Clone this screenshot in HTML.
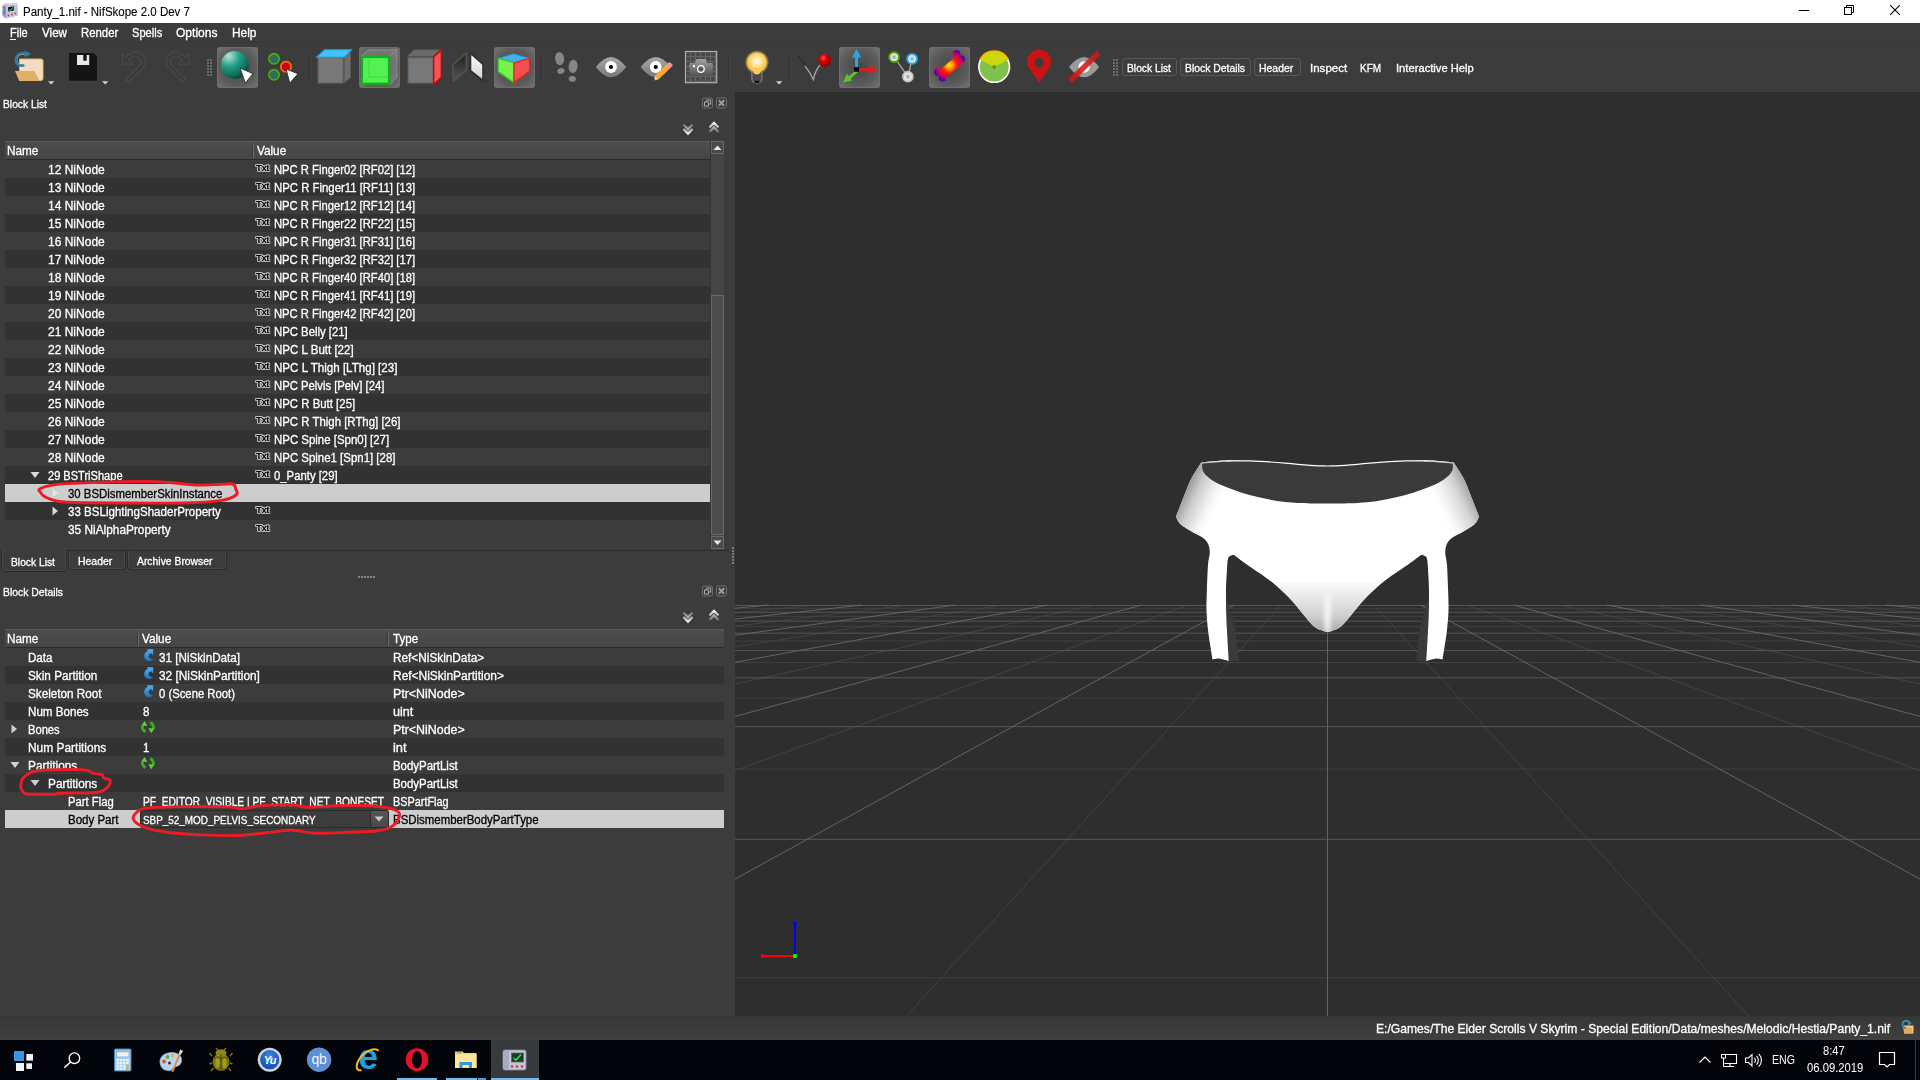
<!DOCTYPE html>
<html><head><meta charset="utf-8"><title>Panty_1.nif - NifSkope 2.0 Dev 7</title>
<style>
*{box-sizing:border-box;margin:0;padding:0}
html,body{width:1920px;height:1080px;overflow:hidden;background:#3c3c3c;font-family:"Liberation Sans",sans-serif;font-size:12px;color:#fff}
div,span,svg{position:absolute}
.t{white-space:nowrap;transform-origin:0 50%;-webkit-text-stroke:0.3px currentColor}
#titlebar{left:0;top:0;width:1920px;height:23px;background:#fff;color:#000}
#menubar{left:0;top:23px;width:1920px;height:20px;background:#3c3c3c}
#toolbar{left:0;top:43px;width:1920px;height:49px;background:#3c3c3c}
#viewport{left:735px;top:92px;width:1185px;height:924px;background:#2e2e2e;overflow:hidden}
#statusbar{left:0;top:1016px;width:1920px;height:24px;background:linear-gradient(#373737,#404040);border-top:1px solid #343434}
#taskbar{left:0;top:1040px;width:1920px;height:40px;background:#03050a}
.hdr{background:linear-gradient(#4d4d4d,#454545);border-top:1px solid #5a5a5a;border-bottom:1px solid #2b2b2b}
.rowd{background:#323232}
.rowl{background:#3c3c3c}
.sel{background:#cdcdcd}
.txt{font-size:9.5px;font-weight:bold;letter-spacing:-0.4px;transform:scaleX(1.001);transform-origin:0 0;color:#000;line-height:10px;text-shadow:-1px 0 #bdbdbd,1px 0 #bdbdbd,0 -1px #bdbdbd,0 1px #bdbdbd,1px 1px #a8a8a8,-1px -1px #a8a8a8,1px -1px #a8a8a8,-1px 1px #a8a8a8;white-space:nowrap}

</style></head>
<body>
<!-- titlebar -->
<div id="titlebar"><span class="t" style="left:23px;top:4px;font-size:12px;line-height:16px;transform:scaleX(0.9591);color:#000;-webkit-text-stroke:0.12px #000;">Panty_1.nif - NifSkope 2.0 Dev 7</span><svg style="left:0;top:0" width="24" height="23" viewBox="0 0 24 23">
<path d="M2.500 5.500 L5 3.500 H17 L17.600 5.500 V15.500 L6 18.600 L2.500 15.500 Z" fill="#b4b4d8"/>
<path d="M2.500 5.500 L5 3.500 H17 L16 5.200 Z" fill="#cfcfea"/>
<path d="M2.500 5.500 L6 6.200 V18.600 L2.500 15.500 Z" fill="#9696be"/>
<path d="M6 6.200 L17.600 5.500 V15.500 L6 18.600 Z" fill="#c2c2e2"/>
<path d="M8.200 7.200 L13.800 6.300 V10.600 L8.200 11.600 Z" fill="#0c140c"/>
<path d="M9 9.800 L10.500 10.300 L13 7.300" stroke="#38c038" stroke-width="1.100" fill="none"/>
<circle cx="8.400" cy="15.400" r="0.900" fill="#d83838"/><circle cx="11.900" cy="14.400" r="0.900" fill="#d83838"/><circle cx="15.400" cy="13.500" r="0.900" fill="#d83838"/>
<path d="M3.200 7.500 L5.300 8.300 M3.200 10 L5.300 10.800 M3.200 12.500 L5.300 13.300" stroke="#5a5a80" stroke-width="0.800"/>
</svg><svg style="left:1780px;top:0" width="140" height="23" viewBox="1780 0 140 23">
<path d="M1799 10.500 H1809" stroke="#000" stroke-width="1"/>
<path d="M1846.500 7 V5.500 H1853.500 V12.500 H1852" fill="none" stroke="#000" stroke-width="1"/><rect x="1844.500" y="7.500" width="7" height="7" fill="none" stroke="#000" stroke-width="1"/>
<path d="M1890.200 5.200 L1899.800 14.800 M1899.800 5.200 L1890.200 14.800" stroke="#000" stroke-width="1.050"/>
</svg></div>
<!-- menubar -->
<div id="menubar"></div><span class="t" style="left:10px;top:25px;font-size:12px;line-height:16px;transform:scaleX(0.9168);">File</span><span class="t" style="left:42px;top:25px;font-size:12px;line-height:16px;transform:scaleX(0.9696);">View</span><span class="t" style="left:81px;top:25px;font-size:12px;line-height:16px;transform:scaleX(0.9476);">Render</span><span class="t" style="left:132px;top:25px;font-size:12px;line-height:16px;transform:scaleX(0.9251);">Spells</span><span class="t" style="left:176px;top:25px;font-size:12px;line-height:16px;transform:scaleX(1.0028);">Options</span><span class="t" style="left:232px;top:25px;font-size:12px;line-height:16px;transform:scaleX(0.9911);">Help</span><div style="left:10px;top:39px;width:6px;height:1px;background:#fff"></div>
<!-- toolbar -->
<div id="toolbar"></div><div style="left:0;top:42px;width:1920px;height:1px;background:#383838"></div><svg style="left:0;top:43px" width="1920" height="49" viewBox="0 43 1920 49"><defs>
<radialGradient id="chk" cx="0.5" cy="0.5" r="0.75"><stop offset="0" stop-color="#454545"/><stop offset="0.6" stop-color="#5c5c5c"/><stop offset="1" stop-color="#787878"/></radialGradient>
<radialGradient id="sph" cx="0.28" cy="0.18" r="0.95"><stop offset="0" stop-color="#b8e6da"/><stop offset="0.4" stop-color="#22a086"/><stop offset="0.75" stop-color="#0d6c5a"/><stop offset="1" stop-color="#052e27"/></radialGradient>
<linearGradient id="cur" x1="0" y1="0" x2="1" y2="1"><stop offset="0" stop-color="#fff"/><stop offset="0.6" stop-color="#fff"/><stop offset="1" stop-color="#bbb"/></linearGradient>
<linearGradient id="eyeg" x1="0" y1="0" x2="0" y2="1"><stop offset="0" stop-color="#a8a8a8"/><stop offset="1" stop-color="#787878"/></linearGradient>
<linearGradient id="camg" x1="0" y1="0" x2="0" y2="1"><stop offset="0" stop-color="#a0a0a0"/><stop offset="1" stop-color="#505050"/></linearGradient>
<linearGradient id="fl1" x1="0" y1="0" x2="0" y2="1"><stop offset="0" stop-color="#1c1c1c"/><stop offset="1" stop-color="#585858"/></linearGradient>
<linearGradient id="fl2" x1="0" y1="0" x2="0" y2="1"><stop offset="0" stop-color="#fff"/><stop offset="1" stop-color="#d0d0d0"/></linearGradient>
<radialGradient id="bulb" cx="0.5" cy="0.45" r="0.55"><stop offset="0" stop-color="#fffdf0"/><stop offset="0.35" stop-color="#ffe9a8"/><stop offset="0.8" stop-color="#ffc552"/><stop offset="1" stop-color="#f7b63c"/></radialGradient>
<radialGradient id="glow" cx="0.5" cy="0.5" r="0.5"><stop offset="0.7" stop-color="#f4e060" stop-opacity="0.9"/><stop offset="1" stop-color="#e8e040" stop-opacity="0"/></radialGradient>
<radialGradient id="redb" cx="0.4" cy="0.3" r="0.7"><stop offset="0" stop-color="#ff5a4a"/><stop offset="0.4" stop-color="#d80000"/><stop offset="1" stop-color="#8a0000"/></radialGradient>
<radialGradient id="bone" gradientUnits="userSpaceOnUse" cx="949.3" cy="65.3" r="16.5"><stop offset="0" stop-color="#fff000"/><stop offset="0.22" stop-color="#ff9800"/><stop offset="0.45" stop-color="#ff1c10"/><stop offset="0.7" stop-color="#e00830"/><stop offset="0.88" stop-color="#8800a0"/><stop offset="1" stop-color="#5000a8"/></radialGradient>
<radialGradient id="nd" cx="0.5" cy="0.5" r="0.5"><stop offset="0" stop-color="#9a9a9a"/><stop offset="0.55" stop-color="#e0e0e0"/><stop offset="1" stop-color="#fff"/></radialGradient>
</defs><path d="M19.500 59 H41 Q43 59 43 61 V78.500 Q43 80.500 41 80.500 H19.500 Z" fill="#f3dcc0" stroke="#e0b46c" stroke-width="1"/><path d="M15 71 H34.500 L39.200 80.500 H19 Z" fill="#ddb06c"/><path d="M24.300 64.600 H19.800 A6.200 6.200 0 1 1 25 54" fill="none" stroke="#c9ced2" stroke-width="2.200" transform="translate(1.600,1.400)"/><path d="M24.300 65.600 H19.300 A6.400 6.400 0 1 1 25.500 53.900" fill="none" stroke="#2c7e9a" stroke-width="2.500"/><path d="M24.800 50.800 L31.300 54 L24.800 57.500 Z" fill="#2c7e9a"/><path d="M48 81.2 H54.4 L51.2 84.4 Z" fill="#cfcfcf"/><path d="M69 53 H93.500 L97 56.500 V80.700 H69 Z" fill="#141414"/><rect x="77" y="55" width="12.200" height="10" fill="#e8e8e8"/><rect x="83.300" y="55" width="3.400" height="5.700" fill="#141414"/><path d="M102 81.2 H108.4 L105.2 84.4 Z" fill="#cfcfcf"/><path d="M128.800 79.300 L141.200 66.700 A7.600 7.600 0 0 0 130 56.300 L128.600 57.600" fill="none" stroke="#4f4f4f" stroke-width="5.400" stroke-linecap="round"/><path d="M122.600 53.500 V64.200 H133.300 Z" fill="#3c3c3c" stroke="#4f4f4f" stroke-width="0.900"/><path d="M128.800 79.300 L141.200 66.700 A7.600 7.600 0 0 0 130 56.300 L128.600 57.600" fill="none" stroke="#3c3c3c" stroke-width="3.600" stroke-linecap="round"/><g transform="translate(311.500 0) scale(-1 1)"><path d="M128.800 79.300 L141.200 66.700 A7.600 7.600 0 0 0 130 56.300 L128.600 57.600" fill="none" stroke="#4f4f4f" stroke-width="5.400" stroke-linecap="round"/><path d="M122.600 53.500 V64.200 H133.300 Z" fill="#3c3c3c" stroke="#4f4f4f" stroke-width="0.900"/><path d="M128.800 79.300 L141.200 66.700 A7.600 7.600 0 0 0 130 56.300 L128.600 57.600" fill="none" stroke="#3c3c3c" stroke-width="3.600" stroke-linecap="round"/></g><rect x="207" y="59" width="2" height="2" fill="#6c6c6c"/><rect x="210" y="59" width="2" height="2" fill="#6c6c6c"/><rect x="207" y="62" width="2" height="2" fill="#6c6c6c"/><rect x="210" y="62" width="2" height="2" fill="#6c6c6c"/><rect x="207" y="65" width="2" height="2" fill="#6c6c6c"/><rect x="210" y="65" width="2" height="2" fill="#6c6c6c"/><rect x="207" y="68" width="2" height="2" fill="#6c6c6c"/><rect x="210" y="68" width="2" height="2" fill="#6c6c6c"/><rect x="207" y="71" width="2" height="2" fill="#6c6c6c"/><rect x="210" y="71" width="2" height="2" fill="#6c6c6c"/><rect x="207" y="74" width="2" height="2" fill="#6c6c6c"/><rect x="210" y="74" width="2" height="2" fill="#6c6c6c"/><rect x="217.5" y="47.5" width="40" height="40" rx="2" fill="url(#chk)" stroke="#6e6e6e" stroke-width="1"/><circle cx="234.900" cy="64.900" r="14" fill="url(#sph)"/><path d="M240.100 68 L253.100 73.700 L245.300 83.100 Z" fill="url(#cur)" stroke="#2a2a2a" stroke-width="0.900" stroke-linejoin="round"/><circle cx="274" cy="58.800" r="5.200" fill="#2c6e64" stroke="#4cae04" stroke-width="1.700"/><circle cx="274" cy="74.800" r="5.200" fill="#2c6e64" stroke="#4cae04" stroke-width="1.700"/><circle cx="286" cy="66.800" r="5.200" fill="#d40000" stroke="#f47404" stroke-width="1.700"/><path d="M286 69 L298 73.700 L289.800 83.100 Z" fill="url(#cur)" stroke="#2a2a2a" stroke-width="0.900" stroke-linejoin="round"/><rect x="309" y="52" width="1" height="31" fill="#343434"/><rect x="310" y="52" width="1" height="31" fill="#424242"/><rect x="318" y="57.600" width="25.300" height="25.500" fill="#787878" stroke="#5c5c5c" stroke-width="1"/><path d="M344.300 57.600 L350.500 51.300 V77.400 L344.300 83.100 Z" fill="#6e6e6e" stroke="#5a5a5a" stroke-width="0.800"/><path d="M316.300 57.400 L324.500 49.700 H351.900 L344.300 57.400 Z" fill="#40c4fc" stroke="#1c94d4" stroke-width="1.200" stroke-linejoin="round"/><rect x="359.5" y="47.5" width="40" height="40" rx="2" fill="url(#chk)" stroke="#6e6e6e" stroke-width="1"/><path d="M361 56 L368.800 49.800 H396.900 V77.400 L390 84.700" fill="#8a8a8a" fill-opacity="0.55" stroke="#8e8e8e" stroke-width="1"/><path d="M390 56 L396.900 49.800" stroke="#8e8e8e" stroke-width="1"/><rect x="362" y="57" width="27" height="26.700" fill="#54f054" stroke="#10b414" stroke-width="2.200"/><path d="M369 58 V77 H388 M369 77 L363 83" stroke="#3ee03e" stroke-width="1" fill="none"/><rect x="408" y="57.600" width="25.300" height="25.500" fill="#787878" stroke="#5c5c5c" stroke-width="1"/><path d="M407.300 56.300 L414 49.800 H440 L433.200 56.300 Z" fill="#6a6a6a" stroke="#5a5a5a" stroke-width="0.800"/><path d="M433.600 57.100 L441.400 49.600 V77.300 L433.600 84.400 Z" fill="#f05454" stroke="#cc0404" stroke-width="1.500" stroke-linejoin="round"/><path d="M452.700 64.900 L466.400 52.800 V70.100 L453.500 81.300 Z" fill="url(#fl1)" stroke="#505050" stroke-width="1.800" stroke-linejoin="round"/><path d="M470.400 53.100 L483.100 64.400 V80.800 L470.400 70.600 Z" fill="url(#fl2)" stroke="#303030" stroke-width="1.800" stroke-linejoin="round"/><rect x="494.5" y="47.5" width="40" height="40" rx="2" fill="url(#chk)" stroke="#6e6e6e" stroke-width="1"/><path d="M498.300 58.400 L513.400 53.900 L529.600 58.400 L514 62.800 Z" fill="#3cb4ec" stroke="#2a9ad4" stroke-width="0.800"/><path d="M498.300 58.400 L514 62.800 V82.600 L498.300 71.600 Z" fill="#7cf04c" stroke="#30d020" stroke-width="1.400" stroke-linejoin="round"/><path d="M514 62.800 L529.600 58.400 V71.100 L514 82.600 Z" fill="#f45050" stroke="#e42424" stroke-width="1.400" stroke-linejoin="round"/><rect x="541" y="52" width="1" height="31" fill="#343434"/><rect x="542" y="52" width="1" height="31" fill="#424242"/><g fill="#868686"><ellipse cx="559.600" cy="58.600" rx="4.500" ry="6.700" transform="rotate(-6 559.600 58.600)"/><ellipse cx="560.900" cy="71" rx="3.600" ry="2.900" transform="rotate(-10 560.900 71)"/><ellipse cx="573.100" cy="66.400" rx="4.500" ry="6.700" transform="rotate(6 573.100 66.400)"/><ellipse cx="572.300" cy="78.900" rx="3.600" ry="2.900" transform="rotate(10 572.300 78.900)"/></g><path d="M595.8 67 Q604 57 611 57 Q618 57 626.2 67 Q618 77.3 611 77.3 Q604 77.3 595.8 67 Z" fill="url(#eyeg)"/><circle cx="611" cy="67" r="5.900" fill="#fff"/><circle cx="611" cy="67" r="2.100" fill="#000"/><path d="M640.5999999999999 67 Q648.8 57 655.8 57 Q662.8 57 671.0 67 Q662.8 77.3 655.8 77.3 Q648.8 77.3 640.5999999999999 67 Z" fill="url(#eyeg)"/><circle cx="655.8" cy="67" r="5.900" fill="#fff"/><circle cx="655.8" cy="67" r="2.100" fill="#000"/><path d="M658.700 79.200 L655 75.700 L666.500 64.500 L670.200 68.100 Z" fill="#fcaa34"/><path d="M666.500 64.500 L668.600 62.500 Q669.600 61.700 670.600 62.700 L672.300 64.400 Q673.200 65.400 672.300 66.300 L670.200 68.100 Z" fill="#f890a8"/><path d="M655 75.700 L653.800 80.400 L658.700 79.200 Z" fill="#f4d8a8"/><path d="M653.800 80.400 L654.200 78.800 L655.400 80 Z" fill="#444"/><rect x="685.500" y="51.500" width="31.200" height="31.200" fill="#4a4a4a" stroke="#b0b0b0" stroke-width="1.200"/><path d="M690.5 52 V82 M686 56.5 H716 M695.5 52 V82 M686 61.5 H716 M700.5 52 V82 M686 66.5 H716 M705.5 52 V82 M686 71.5 H716 M710.5 52 V82 M686 76.5 H716 M715.5 52 V82 M686 81.5 H716 " stroke="#666" stroke-width="1" fill="none"/><path d="M689.300 64 Q689.300 63 690.300 63 H695 L696 60 Q696.300 59.100 697.300 59.100 H705 Q706 59.100 706.300 60 L707.300 63 H711.900 Q712.900 63 712.900 64 V76.300 H689.300 Z" fill="url(#camg)"/><circle cx="700.900" cy="69" r="3.300" fill="#666" stroke="#fff" stroke-width="1.300"/><rect x="699.600" y="67.700" width="2.600" height="2.600" fill="#555"/><rect x="693" y="65.200" width="2" height="2" fill="#fff"/><rect x="728" y="52" width="1" height="31" fill="#343434"/><rect x="729" y="52" width="1" height="31" fill="#424242"/><circle cx="756.900" cy="62.300" r="12.300" fill="url(#glow)"/><path d="M751.900 68 V79 Q751.900 83 756.900 83 Q761.900 83 761.900 79 V68" fill="#4a4a4a" stroke="#9a9a9a" stroke-width="0.900"/><rect x="754.600" y="80.800" width="4.600" height="2.200" fill="#0a0a0a"/><circle cx="756.900" cy="62.300" r="9.900" fill="url(#bulb)"/><path d="M752 68 Q752.500 74.500 756.900 74.500 Q761.300 74.500 761.800 68 Z" fill="#ffc95a"/><path d="M776 81.2 H782.4 L779.2 84.4 Z" fill="#cfcfcf"/><rect x="789" y="52" width="1" height="31" fill="#343434"/><rect x="790" y="52" width="1" height="31" fill="#424242"/><path d="M797.700 55.500 Q808 66 813.300 79.500" fill="none" stroke="#2c2c2c" stroke-width="1.200"/><path d="M805 66 Q810 72 813.300 79.500 Q815.500 70 820.500 64.500" fill="none" stroke="#b8b8b8" stroke-width="1.300" stroke-opacity="0.850"/><circle cx="824.600" cy="60.500" r="6.400" fill="url(#redb)"/><rect x="839.5" y="47.5" width="40" height="40" rx="2" fill="url(#chk)" stroke="#6e6e6e" stroke-width="1"/><path d="M855.100 69 V57.600 H851.900 L856.600 49 L861.300 57.600 H858.100 V69 Z" fill="#28a8e4"/><path d="M858 68.300 H869.600 V65.300 L877.400 69.800 L869.600 74.300 V71.300 H858 Z" fill="#e01c1c"/><path d="M856.400 70 L848.900 76.200 L846.800 73.800 L843 82.600 L852.500 80.600 L850.700 78.400 L858.200 72 Z" fill="#60c424"/><rect x="854.200" y="67.100" width="4.700" height="4.700" fill="#0a0a0a"/><path d="M894.100 57.100 L907.900 76.600 L912.100 58.800" fill="none" stroke="#a0a0a0" stroke-width="1.400"/><circle cx="894.1" cy="57.1" r="4.900" fill="url(#nd)" stroke="#44aa04" stroke-width="2"/><circle cx="912.1" cy="58.8" r="4.900" fill="url(#nd)" stroke="#14b0f0" stroke-width="2"/><circle cx="907.9" cy="76.6" r="4.900" fill="url(#nd)" stroke="#c4c4c4" stroke-width="2"/><rect x="929.5" y="47.5" width="40" height="40" rx="2" fill="url(#chk)" stroke="#6e6e6e" stroke-width="1"/><g fill="url(#bone)"><path d="M939.500 70 L955.500 56.500 L962 64 L946 77.500 Z"/><circle cx="938" cy="72" r="3.900"/><circle cx="942.500" cy="77.500" r="3.900"/><circle cx="956.500" cy="53.800" r="3.900"/><circle cx="961" cy="59.200" r="3.900"/></g><circle cx="994.200" cy="67" r="15.300" fill="#80c04c" stroke="#fff" stroke-width="1.600"/><path d="M994.200 67 L980.500 59.700 A15.500 15.500 0 0 1 1007.900 59.700 Z" fill="#ccd80c"/><path d="M980 59.800 A16 16 0 0 1 1008.400 59.800" fill="none" stroke="#fcb404" stroke-width="1.800"/><circle cx="994.200" cy="67" r="1.900" fill="#6c8c2c"/><path d="M1039.100 83.100 Q1033 73 1029.300 68.500 A12 12 0 1 1 1048.900 68.500 Q1045.200 73 1039.100 83.100 Z M1039.100 58.100 A4.700 4.700 0 1 0 1039.100 67.500 A4.700 4.700 0 1 0 1039.100 58.100 Z" fill="#c81414" fill-rule="evenodd"/><path d="M1069 67 Q1077 57 1084.100 57 Q1091.200 57 1099.200 67 Q1091.200 77.300 1084.100 77.300 Q1077 77.300 1069 67 Z" fill="#9a9a9a"/><circle cx="1084.100" cy="67" r="5.700" fill="#fff"/><path d="M1070 81 L1098.300 52.900" stroke="#d41818" stroke-opacity="0.880" stroke-width="5.600"/><rect x="1113" y="59" width="2" height="2" fill="#6c6c6c"/><rect x="1116" y="59" width="2" height="2" fill="#6c6c6c"/><rect x="1113" y="62" width="2" height="2" fill="#6c6c6c"/><rect x="1116" y="62" width="2" height="2" fill="#6c6c6c"/><rect x="1113" y="65" width="2" height="2" fill="#6c6c6c"/><rect x="1116" y="65" width="2" height="2" fill="#6c6c6c"/><rect x="1113" y="68" width="2" height="2" fill="#6c6c6c"/><rect x="1116" y="68" width="2" height="2" fill="#6c6c6c"/><rect x="1113" y="71" width="2" height="2" fill="#6c6c6c"/><rect x="1116" y="71" width="2" height="2" fill="#6c6c6c"/><rect x="1113" y="74" width="2" height="2" fill="#6c6c6c"/><rect x="1116" y="74" width="2" height="2" fill="#6c6c6c"/><rect x="1122.5" y="58.500" width="54" height="17" rx="2.500" fill="#3e3e3e" stroke="#585858" stroke-width="1"/><rect x="1180.5" y="58.500" width="70" height="17" rx="2.500" fill="#3e3e3e" stroke="#585858" stroke-width="1"/><rect x="1254.5" y="58.500" width="46" height="17" rx="2.500" fill="#3e3e3e" stroke="#585858" stroke-width="1"/></svg><span class="t" style="left:1127px;top:60px;font-size:11px;line-height:16px;transform:scaleX(0.9334);">Block List</span><span class="t" style="left:1185px;top:60px;font-size:11px;line-height:16px;transform:scaleX(0.9443);">Block Details</span><span class="t" style="left:1259px;top:60px;font-size:11px;line-height:16px;transform:scaleX(0.9486);">Header</span><span class="t" style="left:1310px;top:60px;font-size:11px;line-height:16px;transform:scaleX(1.0490);">Inspect</span><span class="t" style="left:1360px;top:60px;font-size:11px;line-height:16px;transform:scaleX(0.9052);">KFM</span><span class="t" style="left:1396px;top:60px;font-size:11px;line-height:16px;transform:scaleX(1.0180);">Interactive Help</span>
<!-- blocklist -->
<span class="t" style="left:3px;top:96px;font-size:11px;line-height:16px;transform:scaleX(0.9334);">Block List</span><div style="left:5px;top:141px;width:705px;height:409px;background:#3c3c3c;overflow:hidden"><div class="rowl" style="left:0;top:19px;width:705px;height:18px"></div><span class="t" style="left:43px;top:21px;font-size:12px;line-height:16px;transform:scaleX(1.0010);">12 NiNode</span><span class="txt" style="left:250.5px;top:22px">Txt</span><span class="t" style="left:269px;top:21px;font-size:12px;line-height:16px;transform:scaleX(0.9362);">NPC R Finger02 [RF02] [12]</span><div class="rowd" style="left:0;top:37px;width:705px;height:18px"></div><span class="t" style="left:43px;top:39px;font-size:12px;line-height:16px;transform:scaleX(1.0010);">13 NiNode</span><span class="txt" style="left:250.5px;top:40px">Txt</span><span class="t" style="left:269px;top:39px;font-size:12px;line-height:16px;transform:scaleX(0.9474);">NPC R Finger11 [RF11] [13]</span><div class="rowl" style="left:0;top:55px;width:705px;height:18px"></div><span class="t" style="left:43px;top:57px;font-size:12px;line-height:16px;transform:scaleX(1.0010);">14 NiNode</span><span class="txt" style="left:250.5px;top:58px">Txt</span><span class="t" style="left:269px;top:57px;font-size:12px;line-height:16px;transform:scaleX(0.9362);">NPC R Finger12 [RF12] [14]</span><div class="rowd" style="left:0;top:73px;width:705px;height:18px"></div><span class="t" style="left:43px;top:75px;font-size:12px;line-height:16px;transform:scaleX(1.0010);">15 NiNode</span><span class="txt" style="left:250.5px;top:76px">Txt</span><span class="t" style="left:269px;top:75px;font-size:12px;line-height:16px;transform:scaleX(0.9362);">NPC R Finger22 [RF22] [15]</span><div class="rowl" style="left:0;top:91px;width:705px;height:18px"></div><span class="t" style="left:43px;top:93px;font-size:12px;line-height:16px;transform:scaleX(1.0010);">16 NiNode</span><span class="txt" style="left:250.5px;top:94px">Txt</span><span class="t" style="left:269px;top:93px;font-size:12px;line-height:16px;transform:scaleX(0.9362);">NPC R Finger31 [RF31] [16]</span><div class="rowd" style="left:0;top:109px;width:705px;height:18px"></div><span class="t" style="left:43px;top:111px;font-size:12px;line-height:16px;transform:scaleX(1.0010);">17 NiNode</span><span class="txt" style="left:250.5px;top:112px">Txt</span><span class="t" style="left:269px;top:111px;font-size:12px;line-height:16px;transform:scaleX(0.9362);">NPC R Finger32 [RF32] [17]</span><div class="rowl" style="left:0;top:127px;width:705px;height:18px"></div><span class="t" style="left:43px;top:129px;font-size:12px;line-height:16px;transform:scaleX(1.0010);">18 NiNode</span><span class="txt" style="left:250.5px;top:130px">Txt</span><span class="t" style="left:269px;top:129px;font-size:12px;line-height:16px;transform:scaleX(0.9362);">NPC R Finger40 [RF40] [18]</span><div class="rowd" style="left:0;top:145px;width:705px;height:18px"></div><span class="t" style="left:43px;top:147px;font-size:12px;line-height:16px;transform:scaleX(1.0010);">19 NiNode</span><span class="txt" style="left:250.5px;top:148px">Txt</span><span class="t" style="left:269px;top:147px;font-size:12px;line-height:16px;transform:scaleX(0.9362);">NPC R Finger41 [RF41] [19]</span><div class="rowl" style="left:0;top:163px;width:705px;height:18px"></div><span class="t" style="left:43px;top:165px;font-size:12px;line-height:16px;transform:scaleX(1.0010);">20 NiNode</span><span class="txt" style="left:250.5px;top:166px">Txt</span><span class="t" style="left:269px;top:165px;font-size:12px;line-height:16px;transform:scaleX(0.9362);">NPC R Finger42 [RF42] [20]</span><div class="rowd" style="left:0;top:181px;width:705px;height:18px"></div><span class="t" style="left:43px;top:183px;font-size:12px;line-height:16px;transform:scaleX(1.0010);">21 NiNode</span><span class="txt" style="left:250.5px;top:184px">Txt</span><span class="t" style="left:269px;top:183px;font-size:12px;line-height:16px;transform:scaleX(0.9451);">NPC Belly [21]</span><div class="rowl" style="left:0;top:199px;width:705px;height:18px"></div><span class="t" style="left:43px;top:201px;font-size:12px;line-height:16px;transform:scaleX(1.0010);">22 NiNode</span><span class="txt" style="left:250.5px;top:202px">Txt</span><span class="t" style="left:269px;top:201px;font-size:12px;line-height:16px;transform:scaleX(0.9602);">NPC L Butt [22]</span><div class="rowd" style="left:0;top:217px;width:705px;height:18px"></div><span class="t" style="left:43px;top:219px;font-size:12px;line-height:16px;transform:scaleX(1.0010);">23 NiNode</span><span class="txt" style="left:250.5px;top:220px">Txt</span><span class="t" style="left:269px;top:219px;font-size:12px;line-height:16px;transform:scaleX(0.9652);">NPC L Thigh [LThg] [23]</span><div class="rowl" style="left:0;top:235px;width:705px;height:18px"></div><span class="t" style="left:43px;top:237px;font-size:12px;line-height:16px;transform:scaleX(1.0010);">24 NiNode</span><span class="txt" style="left:250.5px;top:238px">Txt</span><span class="t" style="left:269px;top:237px;font-size:12px;line-height:16px;transform:scaleX(0.9401);">NPC Pelvis [Pelv] [24]</span><div class="rowd" style="left:0;top:253px;width:705px;height:18px"></div><span class="t" style="left:43px;top:255px;font-size:12px;line-height:16px;transform:scaleX(1.0010);">25 NiNode</span><span class="txt" style="left:250.5px;top:256px">Txt</span><span class="t" style="left:269px;top:255px;font-size:12px;line-height:16px;transform:scaleX(0.9506);">NPC R Butt [25]</span><div class="rowl" style="left:0;top:271px;width:705px;height:18px"></div><span class="t" style="left:43px;top:273px;font-size:12px;line-height:16px;transform:scaleX(1.0010);">26 NiNode</span><span class="txt" style="left:250.5px;top:274px">Txt</span><span class="t" style="left:269px;top:273px;font-size:12px;line-height:16px;transform:scaleX(0.9510);">NPC R Thigh [RThg] [26]</span><div class="rowd" style="left:0;top:289px;width:705px;height:18px"></div><span class="t" style="left:43px;top:291px;font-size:12px;line-height:16px;transform:scaleX(1.0010);">27 NiNode</span><span class="txt" style="left:250.5px;top:292px">Txt</span><span class="t" style="left:269px;top:291px;font-size:12px;line-height:16px;transform:scaleX(0.9530);">NPC Spine [Spn0] [27]</span><div class="rowl" style="left:0;top:307px;width:705px;height:18px"></div><span class="t" style="left:43px;top:309px;font-size:12px;line-height:16px;transform:scaleX(1.0010);">28 NiNode</span><span class="txt" style="left:250.5px;top:310px">Txt</span><span class="t" style="left:269px;top:309px;font-size:12px;line-height:16px;transform:scaleX(0.9532);">NPC Spine1 [Spn1] [28]</span><div class="rowd" style="left:0;top:325px;width:705px;height:18px"></div><div style="left:0;top:325px;width:240px;height:15px;overflow:hidden"><span class="t" style="left:43px;top:2px;font-size:12px;line-height:16px;transform:scaleX(0.9209);">29 BSTriShape</span></div><span class="t" style="left:269px;top:327px;font-size:12px;line-height:16px;transform:scaleX(0.9441);">0_Panty [29]</span><span class="txt" style="left:250.5px;top:328px">Txt</span><div class="sel" style="left:0;top:343px;width:705px;height:18px"></div><span class="t" style="left:63px;top:345px;font-size:12px;line-height:16px;transform:scaleX(0.9481);color:#000;">30 BSDismemberSkinInstance</span><div class="rowd" style="left:0;top:361px;width:705px;height:18px"></div><span class="t" style="left:63px;top:363px;font-size:12px;line-height:16px;transform:scaleX(0.9630);">33 BSLightingShaderProperty</span><span class="txt" style="left:250.5px;top:364px">Txt</span><div class="rowl" style="left:0;top:379px;width:705px;height:18px"></div><span class="t" style="left:63px;top:381px;font-size:12px;line-height:16px;transform:scaleX(0.9876);">35 NiAlphaProperty</span><span class="txt" style="left:250.5px;top:382px">Txt</span><svg style="left:24px;top:329px" width="12" height="10"><path d="M1.5 2 L10.5 2 L6 8 Z" fill="#d8d8d8"/></svg><svg style="left:45px;top:346px" width="10" height="12"><path d="M2.5 1.5 L8 6 L2.5 10.5 Z" fill="#e4e4e4"/></svg><svg style="left:45px;top:364px" width="10" height="12"><path d="M2.5 1.5 L8 6 L2.5 10.5 Z" fill="#d8d8d8"/></svg><div class="hdr" style="left:0;top:0;width:705px;height:19px"></div><div style="left:248px;top:2px;width:1px;height:15px;background:#6a6a6a"></div><div style="left:247px;top:2px;width:1px;height:15px;background:#3a3a3a"></div><span class="t" style="left:2px;top:2px;font-size:12px;line-height:16px;transform:scaleX(0.9777);">Name</span><span class="t" style="left:252px;top:2px;font-size:12px;line-height:16px;transform:scaleX(0.9791);">Value</span></div><div style="left:710px;top:141px;width:1px;height:409px;background:#343434"></div><div style="left:711px;top:141px;width:13px;height:409px;background:#454545"></div><div style="left:711px;top:141px;width:13px;height:13px;background:#4a4a4a;border:1px solid #666"></div><svg style="left:711px;top:141px" width="13" height="13"><path d="M2.5 9 L6.5 4.5 L10.5 9 Z" fill="#e8e8e8"/></svg><div style="left:711px;top:536px;width:13px;height:13px;background:#4a4a4a;border:1px solid #666"></div><svg style="left:711px;top:536px" width="13" height="13"><path d="M2.5 4.5 L10.5 4.5 L6.5 9 Z" fill="#e8e8e8"/></svg><div style="left:711px;top:295px;width:13px;height:240px;background:#4d4d4d;border:1px solid #686868"></div><div style="left:0;top:550px;width:729px;height:1px;background:#2b2b2b"></div><div style="left:1px;top:550px;width:66px;height:22px;background:#3c3c3c;border:1px solid #2c2c2c;border-top:none;border-radius:0 0 4px 4px;box-shadow:inset 1px 0 0 #484848,inset -1px 0 0 #484848,inset 0 -1px 0 #484848"></div><div style="left:68px;top:551px;width:58px;height:19px;background:#3c3c3c;border:1px solid #2c2c2c;border-top:none;border-radius:0 0 4px 4px;box-shadow:inset 1px 0 0 #484848,inset -1px 0 0 #484848,inset 0 -1px 0 #484848"></div><div style="left:127px;top:551px;width:100px;height:19px;background:#3c3c3c;border:1px solid #2c2c2c;border-top:none;border-radius:0 0 4px 4px;box-shadow:inset 1px 0 0 #484848,inset -1px 0 0 #484848,inset 0 -1px 0 #484848"></div><span class="t" style="left:11px;top:554px;font-size:11px;line-height:16px;transform:scaleX(0.9334);">Block List</span><span class="t" style="left:78px;top:553px;font-size:11px;line-height:16px;transform:scaleX(0.9486);">Header</span><span class="t" style="left:137px;top:553px;font-size:11px;line-height:16px;transform:scaleX(0.9430);">Archive Browser</span>
<!-- blockdetails -->
<span class="t" style="left:3px;top:584px;font-size:11px;line-height:16px;transform:scaleX(0.9443);">Block Details</span><div style="left:5px;top:629px;width:719px;height:199px;background:#3c3c3c;overflow:hidden"><div class="rowl" style="left:0;top:19px;width:719px;height:18px"></div><span class="t" style="left:23px;top:21px;font-size:12px;line-height:16px;transform:scaleX(0.9627);">Data</span><svg style="left:131px;top:19px" width="20" height="18" viewBox="0 0 20 18"><defs><linearGradient id="rg19" x1="0" y1="0" x2="0" y2="1"><stop offset="0" stop-color="#52b0f2"/><stop offset="1" stop-color="#1a76c6"/></linearGradient></defs><path d="M17.1 11.2 Q15 13.3 12.6 12.9 Q8.2 12.1 8.2 7.9 Q8.3 4 12.1 2.7 L10.6 1.2 H17.2 V7.2 L15.2 5.3 Q12.3 6.3 12.5 8.4 Q12.9 10.6 17.1 11.2 Z" fill="url(#rg19)"/></svg><span class="t" style="left:154px;top:21px;font-size:12px;line-height:16px;transform:scaleX(0.9725);">31 [NiSkinData]</span><span class="t" style="left:388px;top:21px;font-size:12px;line-height:16px;transform:scaleX(0.9829);">Ref&lt;NiSkinData&gt;</span><div class="rowd" style="left:0;top:37px;width:719px;height:18px"></div><span class="t" style="left:23px;top:39px;font-size:12px;line-height:16px;transform:scaleX(0.9793);">Skin Partition</span><svg style="left:131px;top:37px" width="20" height="18" viewBox="0 0 20 18"><defs><linearGradient id="rg37" x1="0" y1="0" x2="0" y2="1"><stop offset="0" stop-color="#52b0f2"/><stop offset="1" stop-color="#1a76c6"/></linearGradient></defs><path d="M17.1 11.2 Q15 13.3 12.6 12.9 Q8.2 12.1 8.2 7.9 Q8.3 4 12.1 2.7 L10.6 1.2 H17.2 V7.2 L15.2 5.3 Q12.3 6.3 12.5 8.4 Q12.9 10.6 17.1 11.2 Z" fill="url(#rg37)"/></svg><span class="t" style="left:154px;top:39px;font-size:12px;line-height:16px;transform:scaleX(0.9888);">32 [NiSkinPartition]</span><span class="t" style="left:388px;top:39px;font-size:12px;line-height:16px;transform:scaleX(0.9961);">Ref&lt;NiSkinPartition&gt;</span><div class="rowl" style="left:0;top:55px;width:719px;height:18px"></div><span class="t" style="left:23px;top:57px;font-size:12px;line-height:16px;transform:scaleX(0.9735);">Skeleton Root</span><svg style="left:131px;top:55px" width="20" height="18" viewBox="0 0 20 18"><defs><linearGradient id="rg55" x1="0" y1="0" x2="0" y2="1"><stop offset="0" stop-color="#52b0f2"/><stop offset="1" stop-color="#1a76c6"/></linearGradient></defs><path d="M17.1 11.2 Q15 13.3 12.6 12.9 Q8.2 12.1 8.2 7.9 Q8.3 4 12.1 2.7 L10.6 1.2 H17.2 V7.2 L15.2 5.3 Q12.3 6.3 12.5 8.4 Q12.9 10.6 17.1 11.2 Z" fill="url(#rg55)"/></svg><span class="t" style="left:154px;top:57px;font-size:12px;line-height:16px;transform:scaleX(0.9408);">0 (Scene Root)</span><span class="t" style="left:388px;top:57px;font-size:12px;line-height:16px;transform:scaleX(1.0341);">Ptr&lt;NiNode&gt;</span><div class="rowd" style="left:0;top:73px;width:719px;height:18px"></div><span class="t" style="left:23px;top:75px;font-size:12px;line-height:16px;transform:scaleX(0.9678);">Num Bones</span><span class="t" style="left:138px;top:75px;font-size:12px;line-height:16px;transform:scaleX(0.9577);">8</span><span class="t" style="left:388px;top:75px;font-size:12px;line-height:16px;transform:scaleX(1.0485);">uint</span><div class="rowl" style="left:0;top:91px;width:719px;height:18px"></div><span class="t" style="left:23px;top:93px;font-size:12px;line-height:16px;transform:scaleX(0.9307);">Bones</span><svg style="left:131px;top:91px" width="20" height="18" viewBox="0 0 20 18"><path d="M9.6 11.6 Q5.6 10 6.6 5.2" fill="none" stroke="#3aac22" stroke-width="2.8"/><path d="M5.4 5.6 L8.6 0.9 L11.4 5.9 Z" fill="#62d23c"/><path d="M14.2 2.6 Q18.2 4.2 17.2 9" fill="none" stroke="#3aac22" stroke-width="2.8"/><path d="M18.4 8.6 L15.2 13.3 L12.4 8.3 Z" fill="#62d23c"/></svg><span class="t" style="left:388px;top:93px;font-size:12px;line-height:16px;transform:scaleX(1.0341);">Ptr&lt;NiNode&gt;</span><div class="rowd" style="left:0;top:109px;width:719px;height:18px"></div><span class="t" style="left:23px;top:111px;font-size:12px;line-height:16px;transform:scaleX(0.9945);">Num Partitions</span><span class="t" style="left:138px;top:111px;font-size:12px;line-height:16px;transform:scaleX(0.9577);">1</span><span class="t" style="left:388px;top:111px;font-size:12px;line-height:16px;transform:scaleX(1.0721);">int</span><div class="rowl" style="left:0;top:127px;width:719px;height:18px"></div><div style="left:0;top:127px;width:133px;height:14px;overflow:hidden"><span class="t" style="left:23px;top:2px;font-size:12px;line-height:16px;transform:scaleX(0.9846);">Partitions</span></div><svg style="left:131px;top:127px" width="20" height="18" viewBox="0 0 20 18"><path d="M9.6 11.6 Q5.6 10 6.6 5.2" fill="none" stroke="#3aac22" stroke-width="2.8"/><path d="M5.4 5.6 L8.6 0.9 L11.4 5.9 Z" fill="#62d23c"/><path d="M14.2 2.6 Q18.2 4.2 17.2 9" fill="none" stroke="#3aac22" stroke-width="2.8"/><path d="M18.4 8.6 L15.2 13.3 L12.4 8.3 Z" fill="#62d23c"/></svg><span class="t" style="left:388px;top:129px;font-size:12px;line-height:16px;transform:scaleX(0.9519);">BodyPartList</span><div class="rowd" style="left:0;top:145px;width:719px;height:18px"></div><span class="t" style="left:43px;top:147px;font-size:12px;line-height:16px;transform:scaleX(0.9846);">Partitions</span><span class="t" style="left:388px;top:147px;font-size:12px;line-height:16px;transform:scaleX(0.9519);">BodyPartList</span><div class="rowl" style="left:0;top:163px;width:719px;height:18px"></div><span class="t" style="left:63px;top:165px;font-size:12px;line-height:16px;transform:scaleX(0.9392);">Part Flag</span><span class="t" style="left:388px;top:165px;font-size:12px;line-height:16px;transform:scaleX(0.9057);">BSPartFlag</span><div style="left:133px;top:163px;width:250px;height:15px;overflow:hidden"><span class="t" style="left:5px;top:2px;font-size:12px;line-height:16px;transform:scaleX(0.8490);">PF_EDITOR_VISIBLE | PF_START_NET_BONESET</span></div><div class="sel" style="left:0;top:181px;width:719px;height:18px"></div><span class="t" style="left:63px;top:183px;font-size:12px;line-height:16px;transform:scaleX(0.9587);color:#000;">Body Part</span><span class="t" style="left:388px;top:183px;font-size:12px;line-height:16px;transform:scaleX(0.9533);color:#000;">BSDismemberBodyPartType</span><div style="left:135px;top:181px;width:249px;height:18px;background:#3c3c3c;border:1px solid #2a2a2a;border-radius:2px"></div><div style="left:365px;top:182px;width:18px;height:16px;background:linear-gradient(#555,#484848);border-left:1px solid #2e2e2e"></div><svg style="left:369px;top:186px" width="10" height="8"><path d="M0.5 1.5 L9.5 1.5 L5 6.5 Z" fill="#c8c8c8"/></svg><span class="t" style="left:138px;top:183px;font-size:11px;line-height:16px;transform:scaleX(0.9005);">SBP_52_MOD_PELVIS_SECONDARY</span><svg style="left:4px;top:94px" width="10" height="12"><path d="M2.5 1.5 L8 6 L2.5 10.5 Z" fill="#d0d0d0"/></svg><svg style="left:4px;top:131px" width="12" height="10"><path d="M1.5 2 L10.5 2 L6 8 Z" fill="#d0d0d0"/></svg><svg style="left:24px;top:149px" width="12" height="10"><path d="M1.5 2 L10.5 2 L6 8 Z" fill="#d0d0d0"/></svg><div class="hdr" style="left:0;top:0;width:719px;height:19px"></div><div style="left:133px;top:2px;width:1px;height:15px;background:#6a6a6a"></div><div style="left:132px;top:2px;width:1px;height:15px;background:#3a3a3a"></div><div style="left:383px;top:2px;width:1px;height:15px;background:#6a6a6a"></div><div style="left:382px;top:2px;width:1px;height:15px;background:#3a3a3a"></div><span class="t" style="left:2px;top:2px;font-size:12px;line-height:16px;transform:scaleX(0.9777);">Name</span><span class="t" style="left:137px;top:2px;font-size:12px;line-height:16px;transform:scaleX(0.9791);">Value</span><span class="t" style="left:388px;top:2px;font-size:12px;line-height:16px;transform:scaleX(0.9656);">Type</span></div>
<!-- viewport -->
<svg style="left:735px;top:92px" width="1185" height="924" viewBox="735 92 1185 924"><rect x="735" y="92" width="1185" height="924" fill="#2e2e2e"/><path d="M735.0 977.83H1920.0M735.0 769.09H1920.0M735.0 698.20H1920.0M735.0 662.50H1920.0M735.0 641.01H1920.0M735.0 626.64H1920.0M735.0 616.36H1920.0M735.0 608.64H1920.0" stroke="#404040" stroke-width="1" fill="none"/><path d="M629.3 605.06L-4989.2 1016M722.4 605.06L-4147.0 1016M815.5 605.06L-3304.7 1016M908.6 605.06L-2462.5 1016M1001.7 605.06L-1620.3 1016M1094.8 605.06L-778.1 1016M1187.9 605.06L64.2 1016M1281.0 605.06L906.4 1016M1374.0 605.06L1748.6 1016M1467.1 605.06L2590.8 1016M1560.2 605.06L3433.1 1016M1653.3 605.06L4275.3 1016M1746.4 605.06L5117.5 1016M1839.5 605.06L5959.7 1016M1932.6 605.06L6802.0 1016M2025.7 605.06L7644.2 1016" stroke="#484848" stroke-width="0.8" fill="none"/><path d="M735.0 839.32H1920.0M735.0 726.64H1920.0M735.0 677.82H1920.0M735.0 650.57H1920.0M735.0 633.17H1920.0M735.0 621.11H1920.0M735.0 612.25H1920.0M735.0 605.46H1920.0" stroke="#565656" stroke-width="1" fill="none"/><path d="M582.8 605.06L-5410.3 1016M675.9 605.06L-4568.1 1016M769.0 605.06L-3725.9 1016M862.1 605.06L-2883.6 1016M955.1 605.06L-2041.4 1016M1048.2 605.06L-1199.2 1016M1141.3 605.06L-357.0 1016M1234.4 605.06L485.3 1016M1327.5 605.06L1327.5 1016M1420.6 605.06L2169.7 1016M1513.7 605.06L3012.0 1016M1606.8 605.06L3854.2 1016M1699.9 605.06L4696.4 1016M1792.9 605.06L5538.6 1016M1886.0 605.06L6380.9 1016M1979.1 605.06L7223.1 1016M2072.2 605.06L8065.3 1016" stroke="#6a6a6a" stroke-width="0.9" fill="none"/><defs>
<linearGradient id="gl" gradientUnits="userSpaceOnUse" x1="1186" y1="488" x2="1222" y2="505"><stop offset="0" stop-color="#999"/><stop offset="0.3" stop-color="#cdcdcd"/><stop offset="0.65" stop-color="#f0f0f0"/><stop offset="1" stop-color="#fff" stop-opacity="0"/></linearGradient>
<linearGradient id="gr" gradientUnits="userSpaceOnUse" x1="1469" y1="488" x2="1433" y2="505"><stop offset="0" stop-color="#a4a4a4"/><stop offset="0.3" stop-color="#d4d4d4"/><stop offset="0.65" stop-color="#f2f2f2"/><stop offset="1" stop-color="#fff" stop-opacity="0"/></linearGradient>
<filter id="bl" x="-30%" y="-60%" width="160%" height="220%"><feGaussianBlur stdDeviation="3.5"/></filter><filter id="bl2" x="-30%" y="-60%" width="160%" height="220%"><feGaussianBlur stdDeviation="7"/></filter>
<linearGradient id="gv" gradientUnits="userSpaceOnUse" x1="0" y1="580" x2="0" y2="633"><stop offset="0" stop-color="#e0e0e0" stop-opacity="0"/><stop offset="0.35" stop-color="#e4e4e4" stop-opacity="0.9"/><stop offset="0.7" stop-color="#cccccc"/><stop offset="0.92" stop-color="#b0b0b0"/><stop offset="1" stop-color="#a0a0a0"/></linearGradient><filter id="bl3" x="-300%" y="-30%" width="700%" height="160%"><feGaussianBlur stdDeviation="2.6 4"/></filter>
<clipPath id="mc"><path d="M1327.50 465.40C1321.67 465.40 1317.08 465.23 1310.00 464.75C1302.92 464.27 1293.33 463.16 1285.00 462.50C1276.67 461.84 1267.50 461.17 1260.00 460.80C1252.50 460.43 1246.25 460.33 1240.00 460.30C1233.75 460.27 1228.96 460.23 1222.50 460.60C1216.04 460.97 1204.79 462.18 1201.25 462.50C1200.29 464.00 1197.38 468.38 1195.50 471.50C1193.62 474.62 1192.17 476.50 1190.00 481.25C1187.83 486.00 1184.83 494.12 1182.50 500.00C1180.17 505.88 1177.08 513.75 1176.00 516.50C1176.67 517.71 1177.46 521.29 1180.00 523.75C1182.54 526.21 1187.50 528.96 1191.25 531.25C1195.00 533.54 1199.71 535.42 1202.50 537.50C1205.29 539.58 1206.79 541.25 1208.00 543.75C1209.21 546.25 1209.75 548.96 1209.75 552.50C1209.75 556.04 1208.47 558.75 1208.00 565.00C1207.53 571.25 1207.15 582.50 1206.90 590.00C1206.65 597.50 1206.32 603.33 1206.50 610.00C1206.68 616.67 1207.32 623.75 1208.00 630.00C1208.68 636.25 1209.85 642.60 1210.60 647.50C1211.35 652.40 1212.18 657.42 1212.50 659.40C1213.54 659.25 1216.04 658.23 1218.75 658.50C1221.46 658.77 1227.08 660.58 1228.75 661.00C1228.54 657.50 1227.92 647.67 1227.50 640.00C1227.08 632.33 1226.50 623.33 1226.25 615.00C1226.00 606.67 1225.89 597.33 1226.00 590.00C1226.11 582.67 1226.57 576.21 1226.90 571.00C1227.23 565.79 1227.40 561.28 1228.00 558.75C1228.60 556.22 1229.54 556.47 1230.50 555.80C1231.46 555.13 1233.21 554.92 1233.75 554.75C1236.04 556.46 1241.04 560.38 1247.50 565.00C1253.96 569.62 1265.21 576.67 1272.50 582.50C1279.79 588.33 1286.04 594.58 1291.25 600.00C1296.46 605.42 1300.00 610.62 1303.75 615.00C1307.50 619.38 1310.62 623.62 1313.75 626.25C1316.88 628.88 1320.21 629.86 1322.50 630.80C1324.79 631.74 1325.83 631.90 1327.50 631.90C1329.17 631.90 1330.21 631.74 1332.50 630.80C1334.79 629.86 1338.12 628.88 1341.25 626.25C1344.38 623.62 1347.50 619.38 1351.25 615.00C1355.00 610.62 1358.54 605.42 1363.75 600.00C1368.96 594.58 1375.21 588.33 1382.50 582.50C1389.79 576.67 1401.04 569.62 1407.50 565.00C1413.96 560.38 1418.96 556.46 1421.25 554.75C1421.79 554.92 1423.54 555.13 1424.50 555.80C1425.46 556.47 1426.40 556.22 1427.00 558.75C1427.60 561.28 1427.77 565.79 1428.10 571.00C1428.43 576.21 1428.89 582.67 1429.00 590.00C1429.11 597.33 1429.00 606.67 1428.75 615.00C1428.50 623.33 1427.92 632.33 1427.50 640.00C1427.08 647.67 1426.46 657.50 1426.25 661.00C1427.92 660.58 1433.54 658.77 1436.25 658.50C1438.96 658.23 1441.46 659.25 1442.50 659.40C1442.82 657.42 1443.65 652.40 1444.40 647.50C1445.15 642.60 1446.32 636.25 1447.00 630.00C1447.68 623.75 1448.32 616.67 1448.50 610.00C1448.68 603.33 1448.35 597.50 1448.10 590.00C1447.85 582.50 1447.47 571.25 1447.00 565.00C1446.53 558.75 1445.25 556.04 1445.25 552.50C1445.25 548.96 1445.79 546.25 1447.00 543.75C1448.21 541.25 1449.71 539.58 1452.50 537.50C1455.29 535.42 1460.00 533.54 1463.75 531.25C1467.50 528.96 1472.46 526.21 1475.00 523.75C1477.54 521.29 1478.33 517.71 1479.00 516.50C1477.92 513.75 1474.83 505.88 1472.50 500.00C1470.17 494.12 1467.17 486.00 1465.00 481.25C1462.83 476.50 1461.38 474.62 1459.50 471.50C1457.62 468.38 1454.71 464.00 1453.75 462.50C1450.21 462.18 1438.96 460.97 1432.50 460.60C1426.04 460.23 1421.25 460.27 1415.00 460.30C1408.75 460.33 1402.50 460.43 1395.00 460.80C1387.50 461.17 1378.33 461.84 1370.00 462.50C1361.67 463.16 1352.08 464.27 1345.00 464.75C1337.92 465.23 1333.33 465.40 1327.50 465.40Z"/></clipPath>
</defs><path d="M1226.00 596.00 L1235.00 627.50 L1238.75 661.00 L1228.00 661.00 L1226.25 615.00Z" fill="#3a3a3a"/><path d="M1429.00 596.00 L1420.00 627.50 L1416.25 661.00 L1427.00 661.00 L1428.75 615.00Z" fill="#3a3a3a"/><path d="M1327.50 465.40C1321.67 465.40 1317.08 465.23 1310.00 464.75C1302.92 464.27 1293.33 463.16 1285.00 462.50C1276.67 461.84 1267.50 461.17 1260.00 460.80C1252.50 460.43 1246.25 460.33 1240.00 460.30C1233.75 460.27 1228.96 460.23 1222.50 460.60C1216.04 460.97 1204.79 462.18 1201.25 462.50C1200.29 464.00 1197.38 468.38 1195.50 471.50C1193.62 474.62 1192.17 476.50 1190.00 481.25C1187.83 486.00 1184.83 494.12 1182.50 500.00C1180.17 505.88 1177.08 513.75 1176.00 516.50C1176.67 517.71 1177.46 521.29 1180.00 523.75C1182.54 526.21 1187.50 528.96 1191.25 531.25C1195.00 533.54 1199.71 535.42 1202.50 537.50C1205.29 539.58 1206.79 541.25 1208.00 543.75C1209.21 546.25 1209.75 548.96 1209.75 552.50C1209.75 556.04 1208.47 558.75 1208.00 565.00C1207.53 571.25 1207.15 582.50 1206.90 590.00C1206.65 597.50 1206.32 603.33 1206.50 610.00C1206.68 616.67 1207.32 623.75 1208.00 630.00C1208.68 636.25 1209.85 642.60 1210.60 647.50C1211.35 652.40 1212.18 657.42 1212.50 659.40C1213.54 659.25 1216.04 658.23 1218.75 658.50C1221.46 658.77 1227.08 660.58 1228.75 661.00C1228.54 657.50 1227.92 647.67 1227.50 640.00C1227.08 632.33 1226.50 623.33 1226.25 615.00C1226.00 606.67 1225.89 597.33 1226.00 590.00C1226.11 582.67 1226.57 576.21 1226.90 571.00C1227.23 565.79 1227.40 561.28 1228.00 558.75C1228.60 556.22 1229.54 556.47 1230.50 555.80C1231.46 555.13 1233.21 554.92 1233.75 554.75C1236.04 556.46 1241.04 560.38 1247.50 565.00C1253.96 569.62 1265.21 576.67 1272.50 582.50C1279.79 588.33 1286.04 594.58 1291.25 600.00C1296.46 605.42 1300.00 610.62 1303.75 615.00C1307.50 619.38 1310.62 623.62 1313.75 626.25C1316.88 628.88 1320.21 629.86 1322.50 630.80C1324.79 631.74 1325.83 631.90 1327.50 631.90C1329.17 631.90 1330.21 631.74 1332.50 630.80C1334.79 629.86 1338.12 628.88 1341.25 626.25C1344.38 623.62 1347.50 619.38 1351.25 615.00C1355.00 610.62 1358.54 605.42 1363.75 600.00C1368.96 594.58 1375.21 588.33 1382.50 582.50C1389.79 576.67 1401.04 569.62 1407.50 565.00C1413.96 560.38 1418.96 556.46 1421.25 554.75C1421.79 554.92 1423.54 555.13 1424.50 555.80C1425.46 556.47 1426.40 556.22 1427.00 558.75C1427.60 561.28 1427.77 565.79 1428.10 571.00C1428.43 576.21 1428.89 582.67 1429.00 590.00C1429.11 597.33 1429.00 606.67 1428.75 615.00C1428.50 623.33 1427.92 632.33 1427.50 640.00C1427.08 647.67 1426.46 657.50 1426.25 661.00C1427.92 660.58 1433.54 658.77 1436.25 658.50C1438.96 658.23 1441.46 659.25 1442.50 659.40C1442.82 657.42 1443.65 652.40 1444.40 647.50C1445.15 642.60 1446.32 636.25 1447.00 630.00C1447.68 623.75 1448.32 616.67 1448.50 610.00C1448.68 603.33 1448.35 597.50 1448.10 590.00C1447.85 582.50 1447.47 571.25 1447.00 565.00C1446.53 558.75 1445.25 556.04 1445.25 552.50C1445.25 548.96 1445.79 546.25 1447.00 543.75C1448.21 541.25 1449.71 539.58 1452.50 537.50C1455.29 535.42 1460.00 533.54 1463.75 531.25C1467.50 528.96 1472.46 526.21 1475.00 523.75C1477.54 521.29 1478.33 517.71 1479.00 516.50C1477.92 513.75 1474.83 505.88 1472.50 500.00C1470.17 494.12 1467.17 486.00 1465.00 481.25C1462.83 476.50 1461.38 474.62 1459.50 471.50C1457.62 468.38 1454.71 464.00 1453.75 462.50C1450.21 462.18 1438.96 460.97 1432.50 460.60C1426.04 460.23 1421.25 460.27 1415.00 460.30C1408.75 460.33 1402.50 460.43 1395.00 460.80C1387.50 461.17 1378.33 461.84 1370.00 462.50C1361.67 463.16 1352.08 464.27 1345.00 464.75C1337.92 465.23 1333.33 465.40 1327.50 465.40Z" fill="#fff"/><g clip-path="url(#mc)"><rect x="1170" y="455" width="70" height="90" fill="url(#gl)"/><rect x="1415" y="455" width="70" height="90" fill="url(#gr)"/><rect x="1270" y="578" width="115" height="58" fill="url(#gv)"/><ellipse cx="1327.5" cy="616" rx="2.6" ry="24" fill="#fff" filter="url(#bl3)"/></g><path d="M1202.20 463.80C1202.33 465.00 1201.70 468.51 1203.00 471.00C1204.30 473.49 1206.75 476.32 1210.00 478.75C1213.25 481.18 1217.33 483.31 1222.50 485.60C1227.67 487.89 1234.75 490.52 1241.00 492.50C1247.25 494.48 1253.71 496.04 1260.00 497.50C1266.29 498.96 1272.50 500.35 1278.75 501.25C1285.00 502.15 1290.21 502.52 1297.50 502.90C1304.79 503.27 1317.50 503.40 1322.50 503.50C1327.50 503.60 1325.83 503.50 1327.50 503.50C1329.17 503.50 1327.50 503.60 1332.50 503.50C1337.50 503.40 1350.21 503.27 1357.50 502.90C1364.79 502.52 1370.00 502.15 1376.25 501.25C1382.50 500.35 1388.71 498.96 1395.00 497.50C1401.29 496.04 1407.75 494.48 1414.00 492.50C1420.25 490.52 1427.33 487.89 1432.50 485.60C1437.67 483.31 1441.75 481.18 1445.00 478.75C1448.25 476.32 1450.70 473.49 1452.00 471.00C1453.30 468.51 1452.67 465.00 1452.80 463.80C1449.42 463.47 1435.88 462.13 1432.50 461.80C1429.58 461.75 1421.25 461.47 1415.00 461.50C1408.75 461.53 1402.50 461.63 1395.00 462.00C1387.50 462.37 1378.33 463.04 1370.00 463.70C1361.67 464.36 1352.08 465.47 1345.00 465.95C1337.92 466.43 1333.33 466.60 1327.50 466.60C1321.67 466.60 1317.08 466.43 1310.00 465.95C1302.92 465.47 1293.33 464.36 1285.00 463.70C1276.67 463.04 1267.50 462.37 1260.00 462.00C1252.50 461.63 1246.25 461.53 1240.00 461.50C1233.75 461.47 1225.42 461.75 1222.50 461.80C1219.12 462.13 1205.58 463.47 1202.20 463.80Z" fill="#3a3a3a"/><path d="M762 956H795" stroke="#ff0000" stroke-width="2.1"/><path d="M795 923V956" stroke="#0000ff" stroke-width="2.1"/><circle cx="762.600" cy="956" r="1.900" fill="#ff0000"/><circle cx="795" cy="923.500" r="1.900" fill="#0000ff"/><rect x="793.100" y="954.100" width="3.800" height="3.800" rx="0.800" fill="#00ff00"/></svg><div style="left:733px;top:92px;width:2px;height:924px;background:#3c3c3c"></div>
<!-- statusbar -->
<div id="statusbar"></div><span class="t" style="left:1376px;top:1021px;font-size:13px;line-height:16px;transform:scaleX(0.9324);">E:/Games/The Elder Scrolls V Skyrim - Special Edition/Data/meshes/Melodic/Hestia/Panty_1.nif</span><svg style="left:1901px;top:1020px" width="15" height="15" viewBox="0 0 15 15">
<path d="M3 5.5 H12.5 V13.5 H3 Z" fill="#f3c98b"/><path d="M2 7.5 H10.5 L12 13.5 H3.3 Z" fill="#e3a95c"/>
<path d="M8.5 3.2 A3.6 3.6 0 1 0 5 8" fill="none" stroke="#3b8fb5" stroke-width="1.8"/><path d="M7 0.5 L11 3.2 L7 5.6 Z" fill="#3b8fb5"/></svg>
<!-- taskbar -->
<div id="taskbar"></div><svg style="left:0;top:1040px" width="1920" height="40" viewBox="0 1040 1920 40"><rect x="491" y="1040" width="48" height="40" fill="#38393c"/><rect x="397" y="1078" width="40" height="2" fill="#76b9ed"/><rect x="446" y="1078" width="31" height="2" fill="#76b9ed"/><rect x="478" y="1078" width="8" height="2" fill="#5b94c2"/><rect x="491" y="1078" width="48" height="2" fill="#76b9ed"/><rect x="14" y="1051" width="10" height="10" fill="#3a96e0"/><rect x="26.3" y="1054" width="6.7" height="6.6" fill="#f4f4fa"/><rect x="16" y="1063" width="8" height="8" fill="#f4f4fa"/><rect x="26.3" y="1063.3" width="5.7" height="5.6" fill="#f4f4fa"/><circle cx="74.4" cy="1058.2" r="5.3" fill="none" stroke="#fff" stroke-width="1.3"/><path d="M70.6 1062 L64.3 1067.7" stroke="#fff" stroke-width="1.5"/><rect x="114.5" y="1049" width="16.5" height="22" rx="1" fill="#a6d2f2" stroke="#3d7fc0" stroke-width="1"/><rect x="116.5" y="1051" width="12.5" height="6" fill="#e8f3fb" stroke="#5a9ad4" stroke-width="0.6"/><rect x="116.5" y="1051" width="12.5" height="1.3" fill="#f5a623"/><rect x="116.6" y="1059.0" width="2.4" height="2.1" fill="#eaf4fc"/><rect x="119.8" y="1059.0" width="2.4" height="2.1" fill="#eaf4fc"/><rect x="123.0" y="1059.0" width="2.4" height="2.1" fill="#eaf4fc"/><rect x="126.2" y="1059.0" width="2.4" height="2.1" fill="#eaf4fc"/><rect x="116.6" y="1061.9" width="2.4" height="2.1" fill="#eaf4fc"/><rect x="119.8" y="1061.9" width="2.4" height="2.1" fill="#eaf4fc"/><rect x="123.0" y="1061.9" width="2.4" height="2.1" fill="#eaf4fc"/><rect x="126.2" y="1061.9" width="2.4" height="2.1" fill="#eaf4fc"/><rect x="116.6" y="1064.8" width="2.4" height="2.1" fill="#eaf4fc"/><rect x="119.8" y="1064.8" width="2.4" height="2.1" fill="#eaf4fc"/><rect x="123.0" y="1064.8" width="2.4" height="2.1" fill="#eaf4fc"/><rect x="126.2" y="1064.8" width="2.4" height="2.1" fill="#f59b23"/><rect x="116.6" y="1067.7" width="2.4" height="2.1" fill="#eaf4fc"/><rect x="119.8" y="1067.7" width="2.4" height="2.1" fill="#eaf4fc"/><rect x="123.0" y="1067.7" width="2.4" height="2.1" fill="#eaf4fc"/><rect x="126.2" y="1067.7" width="2.4" height="2.1" fill="#f59b23"/><path d="M160 1063 C159 1056 166 1052 173 1052.5 C180 1053 183 1058 181 1063 C179.5 1067 175 1066 173.5 1068 C172 1070 171 1071 167 1070.5 C163 1070 160.500 1067 160 1063Z" fill="#b9d6ec" stroke="#7fa9cc" stroke-width="0.7"/><circle cx="164" cy="1061.500" r="1.900" fill="#e04a3f"/><circle cx="167.500" cy="1057" r="1.900" fill="#4caf50"/><circle cx="172.500" cy="1055.500" r="1.900" fill="#f2b632"/><circle cx="169.500" cy="1063" r="1.500" fill="#2e3440"/><path d="M171.500 1071.500 L178.500 1054.500 L180.300 1055.200 L173.200 1072.200Z" fill="#e8873a"/><path d="M178.500 1054.500 L180 1049.500 L183.200 1051 L180.300 1055.200Z" fill="#f3d6a4"/><ellipse cx="221" cy="1062" rx="8.5" ry="9" fill="#7a7410"/><ellipse cx="221" cy="1053" rx="5.5" ry="3.8" fill="#8e8714"/><path d="M221 1054 V1071" stroke="#4a4608" stroke-width="1"/><path d="M213 1058 H229" stroke="#4a4608" stroke-width="0.8"/><path d="M212 1056 L209.500 1053 M230 1056 L232.500 1053 M212 1063 L209.500 1064 M230 1063 L232.500 1064 M213.500 1068 L211 1071 M228.500 1068 L231 1071 M218 1050 L216 1048 M224 1050 L226 1048" stroke="#7a7410" stroke-width="1.400" fill="none"/><ellipse cx="217.500" cy="1063" rx="2.200" ry="5" fill="#b4ad22" opacity="0.700"/><ellipse cx="224.500" cy="1063" rx="2.200" ry="5" fill="#b4ad22" opacity="0.700"/><defs><radialGradient id="yu" cx="0.5" cy="0.35" r="0.7"><stop offset="0" stop-color="#3d8ae6"/><stop offset="1" stop-color="#0b3f9e"/></radialGradient></defs><circle cx="269.700" cy="1059.700" r="10.800" fill="url(#yu)" stroke="#cfd3da" stroke-width="2.400"/><text x="269.700" y="1064" font-family="Liberation Sans,sans-serif" font-weight="bold" font-style="italic" font-size="11" fill="#fff" text-anchor="middle" letter-spacing="-0.8">Yu</text><circle cx="319.100" cy="1059.700" r="11.800" fill="#5b8fd8" stroke="#7aa7e6" stroke-width="0.800"/><text x="319.100" y="1064" font-family="Liberation Sans,sans-serif" font-size="14" fill="#f0f5fc" text-anchor="middle" letter-spacing="-0.300">qb</text><text x="368.3" y="1069.3" font-family="Liberation Sans,sans-serif" font-weight="bold" font-size="35" fill="#1fa0e4" text-anchor="middle">e</text><path d="M378.500 1051 C375.500 1047 364.500 1050.500 359 1059.500 C355 1066.500 356.500 1071.500 361.500 1070" fill="none" stroke="#f2bd1d" stroke-width="2"/><ellipse cx="417" cy="1059.700" rx="11.300" ry="11.500" fill="#e3122c"/><ellipse cx="417" cy="1059.700" rx="5" ry="8.600" fill="#03050a"/><path d="M455 1051.500 H462.500 L464 1053 H476.500 V1068 H455 Z" fill="#f7d673"/><rect x="455" y="1054.500" width="21.500" height="13.500" fill="#fbe59a"/><path d="M459.500 1068 V1062 H472 V1068 H469 V1065 H462.500 V1068 Z" fill="#2d9be0"/><rect x="457" y="1052.300" width="4.500" height="1" fill="#2d9be0"/><rect x="503" y="1050" width="23" height="20" rx="2" fill="#c4c6d6" stroke="#8a8ca4" stroke-width="0.800"/><rect x="504" y="1051" width="5" height="18" fill="#a9abc4"/><rect x="511.500" y="1053" width="12" height="9" fill="#1e3a24" stroke="#62647c" stroke-width="0.800"/><path d="M513.500 1058 L516 1060 L521 1054.500" fill="none" stroke="#3fe04a" stroke-width="1.300"/><circle cx="512" cy="1066.500" r="1.300" fill="#d03a3a"/><circle cx="517" cy="1066.500" r="1.300" fill="#d03a3a"/><circle cx="522" cy="1066.500" r="1.300" fill="#d03a3a"/><path d="M1699.500 1062.500 L1705 1057 L1710.500 1062.500" fill="none" stroke="#fff" stroke-width="1.200"/><path d="M1724.500 1054.500 H1736.500 V1063.500 H1724.500 M1730 1063.500 V1066.500 M1726 1066.500 H1734" fill="none" stroke="#fff" stroke-width="1.100"/><rect x="1721.500" y="1054.500" width="4" height="3.500" fill="#03050a" stroke="#fff" stroke-width="1"/><path d="M1723.500 1058 V1066.500 H1726" fill="none" stroke="#fff" stroke-width="1"/><path d="M1745.500 1058 H1748.500 L1752 1054.500 V1066 L1748.500 1062.500 H1745.500 Z" fill="none" stroke="#fff" stroke-width="1.100"/><path d="M1754.300 1057.800 A3.500 3.500 0 0 1 1754.300 1062.700 M1756.500 1055.800 A6.300 6.300 0 0 1 1756.500 1064.700 M1758.700 1053.800 A9 9 0 0 1 1758.700 1066.700" fill="none" stroke="#fff" stroke-width="1.100"/><path d="M1879.500 1052.500 H1894.500 V1064.500 H1889.500 L1887 1067 L1884.500 1064.500 H1879.500 Z" fill="none" stroke="#fff" stroke-width="1.200"/><rect x="1915" y="1040" width="1" height="40" fill="#3a3c40"/></svg><span class="t" style="left:1772px;top:1052px;font-size:12px;line-height:16px;transform:scaleX(0.8849);-webkit-text-stroke:0;">ENG</span><span class="t" style="left:1823px;top:1043px;font-size:12px;line-height:16px;transform:scaleX(0.9311);-webkit-text-stroke:0;">8:47</span><span class="t" style="left:1806.5px;top:1060px;font-size:12px;line-height:16px;transform:scaleX(0.9370);-webkit-text-stroke:0;">06.09.2019</span>
<!-- annot -->
<svg style="left:700px;top:97px" width="30" height="13" viewBox="0 0 30 13"><rect x="2.500" y="1" width="10" height="10" rx="1.500" fill="none" stroke="#6e6e6e" stroke-width="1"/><rect x="6.700" y="3" width="4" height="4" fill="none" stroke="#a8a8a8" stroke-width="1"/><rect x="4.500" y="5" width="4" height="4" fill="#3c3c3c" stroke="#a8a8a8" stroke-width="1"/><rect x="16.500" y="1" width="10" height="10" rx="1.500" fill="none" stroke="#6e6e6e" stroke-width="1"/><path d="M18.800 3.300 L24.200 8.700 M24.200 3.300 L18.800 8.700" stroke="#9c9c9c" stroke-width="2"/></svg><svg style="left:680px;top:121px" width="44" height="16" viewBox="0 0 44 16"><defs><linearGradient id="cvd121" x1="0" y1="0" x2="0" y2="1"><stop offset="0" stop-color="#707070"/><stop offset="1" stop-color="#f0f0f0"/></linearGradient><linearGradient id="cvu121" x1="0" y1="0" x2="0" y2="1"><stop offset="0" stop-color="#f0f0f0"/><stop offset="1" stop-color="#707070"/></linearGradient></defs><path d="M3.500 3.500 L8 8 L12.500 3.500 M3.500 8 L8 12.500 L12.500 8" fill="none" stroke="url(#cvd121)" stroke-width="2.300"/><path d="M29.500 6.500 L34 2 L38.500 6.500 M29.500 11 L34 6.500 L38.500 11" fill="none" stroke="url(#cvu121)" stroke-width="2.300"/></svg><svg style="left:700px;top:585px" width="30" height="13" viewBox="0 0 30 13"><rect x="2.500" y="1" width="10" height="10" rx="1.500" fill="none" stroke="#6e6e6e" stroke-width="1"/><rect x="6.700" y="3" width="4" height="4" fill="none" stroke="#a8a8a8" stroke-width="1"/><rect x="4.500" y="5" width="4" height="4" fill="#3c3c3c" stroke="#a8a8a8" stroke-width="1"/><rect x="16.500" y="1" width="10" height="10" rx="1.500" fill="none" stroke="#6e6e6e" stroke-width="1"/><path d="M18.800 3.300 L24.200 8.700 M24.200 3.300 L18.800 8.700" stroke="#9c9c9c" stroke-width="2"/></svg><svg style="left:680px;top:609px" width="44" height="16" viewBox="0 0 44 16"><defs><linearGradient id="cvd609" x1="0" y1="0" x2="0" y2="1"><stop offset="0" stop-color="#707070"/><stop offset="1" stop-color="#f0f0f0"/></linearGradient><linearGradient id="cvu609" x1="0" y1="0" x2="0" y2="1"><stop offset="0" stop-color="#f0f0f0"/><stop offset="1" stop-color="#707070"/></linearGradient></defs><path d="M3.500 3.500 L8 8 L12.500 3.500 M3.500 8 L8 12.500 L12.500 8" fill="none" stroke="url(#cvd609)" stroke-width="2.300"/><path d="M29.500 6.500 L34 2 L38.500 6.500 M29.500 11 L34 6.500 L38.500 11" fill="none" stroke="url(#cvu609)" stroke-width="2.300"/></svg><svg style="left:732px;top:547px" width="2" height="18"><rect x="0" y="0" width="2" height="2" fill="#7a7a7a"/><rect x="0" y="3" width="2" height="2" fill="#7a7a7a"/><rect x="0" y="6" width="2" height="2" fill="#7a7a7a"/><rect x="0" y="9" width="2" height="2" fill="#7a7a7a"/><rect x="0" y="12" width="2" height="2" fill="#7a7a7a"/><rect x="0" y="15" width="2" height="2" fill="#7a7a7a"/></svg><svg style="left:358px;top:576px" width="18" height="2"><rect x="0" y="0" width="2" height="2" fill="#868686"/><rect x="3" y="0" width="2" height="2" fill="#868686"/><rect x="6" y="0" width="2" height="2" fill="#868686"/><rect x="9" y="0" width="2" height="2" fill="#868686"/><rect x="12" y="0" width="2" height="2" fill="#868686"/><rect x="15" y="0" width="2" height="2" fill="#868686"/></svg><svg style="left:0;top:460px" width="420" height="390" viewBox="0 460 420 390"><path d="M40.0 488.8C42.8 487.4 48.3 485.4 57.5 484.4C66.7 483.4 80.4 483.0 95.0 482.5C109.6 482.0 132.5 481.5 145.0 481.5C157.5 481.5 161.7 481.9 170.0 482.5C178.3 483.1 187.5 484.6 195.0 485.0C202.5 485.4 208.8 484.8 215.0 484.6C221.2 484.4 229.1 483.3 232.5 484.0C235.9 484.7 235.0 486.9 235.6 488.8C236.2 490.6 238.8 493.0 236.2 495.0C233.7 497.0 229.0 499.3 220.0 500.6C211.0 501.9 197.1 502.6 182.5 503.0C167.9 503.4 149.2 503.0 132.5 503.0C115.8 503.0 95.0 503.0 82.5 502.8C70.0 502.5 63.8 502.2 57.5 501.2C51.2 500.3 47.8 498.4 45.0 496.9C42.2 495.4 41.4 493.9 40.6 492.5C39.8 491.1 37.2 490.1 40.0 488.8Z" fill="none" stroke="#ed1c24" stroke-width="2.9" stroke-linejoin="round"/><path d="M20.8 786.7C20.9 785.0 20.9 782.1 22.0 780.0C23.1 777.9 24.9 775.7 27.5 774.2C30.1 772.7 32.4 771.6 37.5 770.8C42.6 770.0 51.3 769.8 58.3 769.6C65.2 769.4 74.3 769.5 79.2 769.6C84.1 769.7 85.2 769.8 87.5 770.4C89.8 771.0 90.9 772.6 93.3 773.3C95.7 774.0 99.9 773.8 101.7 774.6C103.5 775.4 102.8 777.4 104.2 778.3C105.6 779.2 109.2 778.9 110.0 780.0C110.8 781.1 110.2 783.3 109.2 785.0C108.2 786.7 106.4 788.8 104.2 790.0C102.0 791.2 100.7 792.0 95.8 792.5C90.9 793.0 81.2 792.8 75.0 792.9C68.8 793.0 61.6 793.1 58.3 793.3C55.0 793.5 58.5 794.1 55.0 794.2C51.5 794.4 42.4 794.3 37.5 794.2C32.6 794.1 28.4 794.5 25.8 793.8C23.2 793.0 22.5 791.2 21.7 790.0C20.9 788.8 20.8 788.4 20.8 786.7Z" fill="none" stroke="#ed1c24" stroke-width="2.9" stroke-linejoin="round"/><path d="M133.3 819.0C132.3 816.5 135.0 813.8 137.2 812.0C139.4 810.2 139.0 809.0 146.6 808.1C154.2 807.2 168.7 806.8 182.5 806.6C196.3 806.4 219.5 806.5 229.4 806.9C239.3 807.3 236.7 809.1 241.9 808.9C247.1 808.7 252.3 806.4 260.6 805.8C268.9 805.1 284.1 804.8 291.9 805.0C299.7 805.2 299.7 807.2 307.5 807.3C315.3 807.4 328.3 806.0 338.8 805.8C349.2 805.5 361.1 805.3 370.0 805.8C378.9 806.3 386.9 807.5 391.9 808.9C396.8 810.3 399.4 811.7 399.7 814.4C399.9 817.1 397.0 822.6 393.4 825.3C389.8 828.0 385.6 829.6 377.8 830.8C370.0 832.0 357.0 831.9 346.6 832.3C336.2 832.7 324.4 833.5 315.3 833.1C306.2 832.7 298.4 830.2 291.9 830.0C285.4 829.8 285.4 830.7 276.2 831.6C267.1 832.5 250.2 835.0 237.2 835.5C224.2 836.0 209.8 835.2 198.1 834.7C186.4 834.2 176.0 833.6 166.9 832.3C157.8 831.0 149.0 829.1 143.4 826.9C137.8 824.7 134.3 821.5 133.3 819.0Z" fill="none" stroke="#ed1c24" stroke-width="2.9" stroke-linejoin="round"/></svg>
</body></html>
